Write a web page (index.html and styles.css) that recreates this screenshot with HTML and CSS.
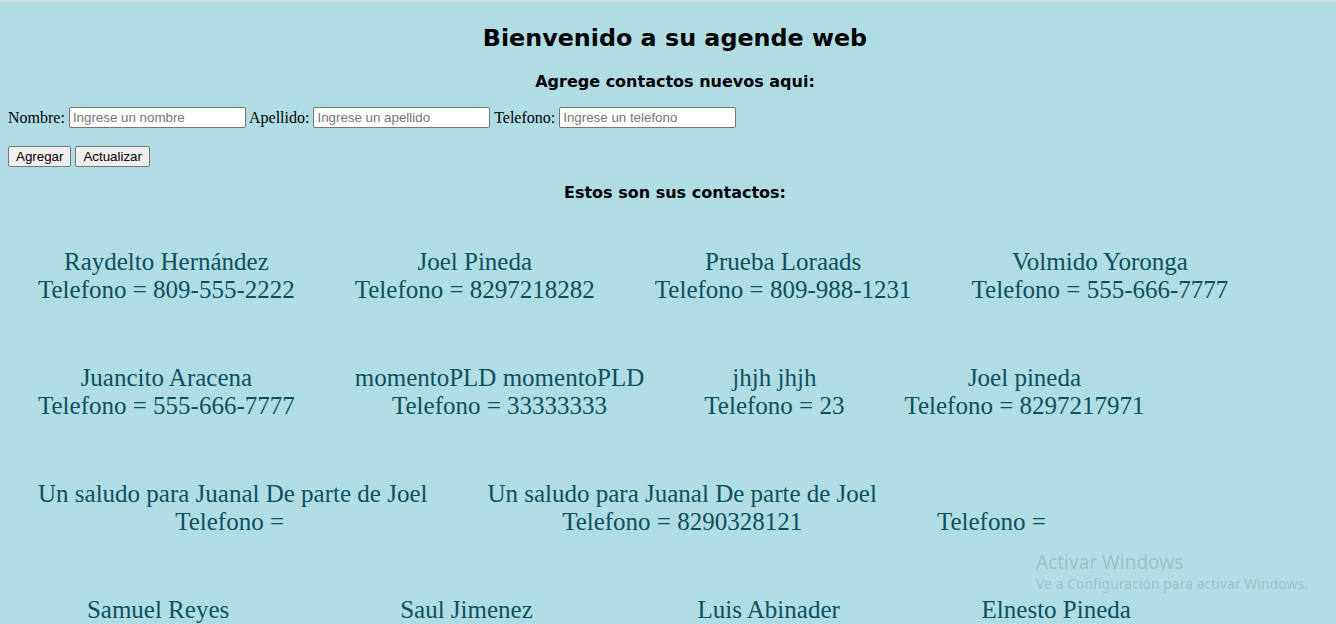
FILE: index.html
```html
<!DOCTYPE html>
<html lang="es">
<head>
<meta charset="utf-8">
<title>Agenda web</title>
<link rel="stylesheet" href="styles.css">
</head>
<body>
<h1 class="title">Bienvenido a su agende web</h1>
<h2 class="subtitle">Agrege contactos nuevos aqui:</h2>
<form class="form">
  <div class="form-row">Nombre: <input class="field" type="text" placeholder="Ingrese un nombre"> Apellido: <input class="field" type="text" placeholder="Ingrese un apellido"> Telefono: <input class="field" type="text" placeholder="Ingrese un telefono"></div>
  <div class="form-actions"><button class="btn" type="button">Agregar</button> <button class="btn" type="button">Actualizar</button></div>
</form>
<h3 class="list-title">Estos son sus contactos:</h3>
<div class="contacts">
  <div class="contact"><div class="name">Raydelto Hernández</div><div class="phone">Telefono = 809-555-2222</div></div>
  <div class="contact"><div class="name">Joel Pineda</div><div class="phone">Telefono = 8297218282</div></div>
  <div class="contact"><div class="name">Prueba Loraads</div><div class="phone">Telefono = 809-988-1231</div></div>
  <div class="contact"><div class="name">Volmido Yoronga</div><div class="phone">Telefono = 555-666-7777</div></div>
  <div class="contact"><div class="name">Juancito Aracena</div><div class="phone">Telefono = 555-666-7777</div></div>
  <div class="contact"><div class="name">momentoPLD momentoPLD</div><div class="phone">Telefono = 33333333</div></div>
  <div class="contact"><div class="name">jhjh jhjh</div><div class="phone">Telefono = 23</div></div>
  <div class="contact"><div class="name">Joel pineda</div><div class="phone">Telefono = 8297217971</div></div>
  <div class="contact"><div class="name">Un saludo para Juanal De parte de Joel</div><div class="phone">Telefono = </div></div>
  <div class="contact"><div class="name">Un saludo para Juanal De parte de Joel</div><div class="phone">Telefono = 8290328121</div></div>
  <div class="contact"><div class="name name-empty"></div><div class="phone">Telefono = </div></div>
  <div class="contact"><div class="name">Samuel Reyes</div><div class="phone">Telefono = 8095551234</div></div>
  <div class="contact"><div class="name">Saul Jimenez</div><div class="phone">Telefono = 809-555-4321</div></div>
  <div class="contact"><div class="name">Luis Abinader</div><div class="phone">Telefono = 809555000</div></div>
  <div class="contact"><div class="name">Elnesto Pineda</div><div class="phone">Telefono = 829721797</div></div>
</div>
<div class="watermark">
  <div class="wm-title">Activar Windows</div>
  <div class="wm-sub">Ve a Configuración para activar Windows.</div>
</div>
</body>
</html>
```

FILE: styles.css
```css
html {
  overflow: hidden;
  border-top: 2px solid #d6dee0;
  background: #b0dde4;
}
body {
  margin: 0;
  padding: 0 8px;
  width: 1334px;
  background: #b0dde4;
  font-family: "Liberation Serif", "Times New Roman", serif;
  font-size: 16px;
  color: #000;
}
.title {
  margin: 22px 0 0;
  font-family: "DejaVu Sans", Verdana, sans-serif;
  font-size: 23.8px;
  line-height: 28px;
  font-weight: bold;
  text-align: center;
}
.subtitle {
  margin: 20px 0 0;
  font-family: "DejaVu Sans", Verdana, sans-serif;
  font-size: 16px;
  line-height: 20px;
  font-weight: bold;
  text-align: center;
}
.form {
  margin: 15px 0 0;
}
.form-row {
  line-height: 21px;
  height: 21px;
}
.field {
  box-sizing: border-box;
  width: 177px;
  height: 21px;
  padding: 1px 3px;
  border: 1px solid #767676;
  border-radius: 2px;
  background: #fff;
  font-family: "Liberation Sans", Arial, sans-serif;
  font-size: 13.33px;
  vertical-align: top;
}
.field::placeholder {
  color: #757575;
}
.form-actions {
  margin-top: 18px;
}
.btn {
  box-sizing: border-box;
  height: 21px;
  padding: 1px 7px;
  border: 1px solid #767676;
  border-radius: 2px;
  background: #efefef;
  font-family: "Liberation Sans", Arial, sans-serif;
  font-size: 13.33px;
  color: #000;
}
.list-title {
  margin: 16px 0 0;
  font-family: "DejaVu Sans", Verdana, sans-serif;
  font-size: 16px;
  line-height: 20px;
  font-weight: bold;
  text-align: center;
}
.contacts {
  margin-top: 15px;
  display: flex;
  flex-wrap: wrap;
}
.contact {
  margin: 30px;
  text-align: center;
  font-size: 25px;
  line-height: 28px;
  color: #0e4f5e;
  white-space: pre;
}
.name-empty {
  height: 28px;
}
.watermark {
  position: fixed;
  left: 1036px;
  top: 550px;
  color: #9dbfc6;
  font-family: "Noto Sans", "Open Sans", sans-serif;
}
.wm-title {
  font-size: 19px;
  line-height: 24px;
}
.wm-sub {
  font-size: 14px;
  line-height: 19px;
}
```
